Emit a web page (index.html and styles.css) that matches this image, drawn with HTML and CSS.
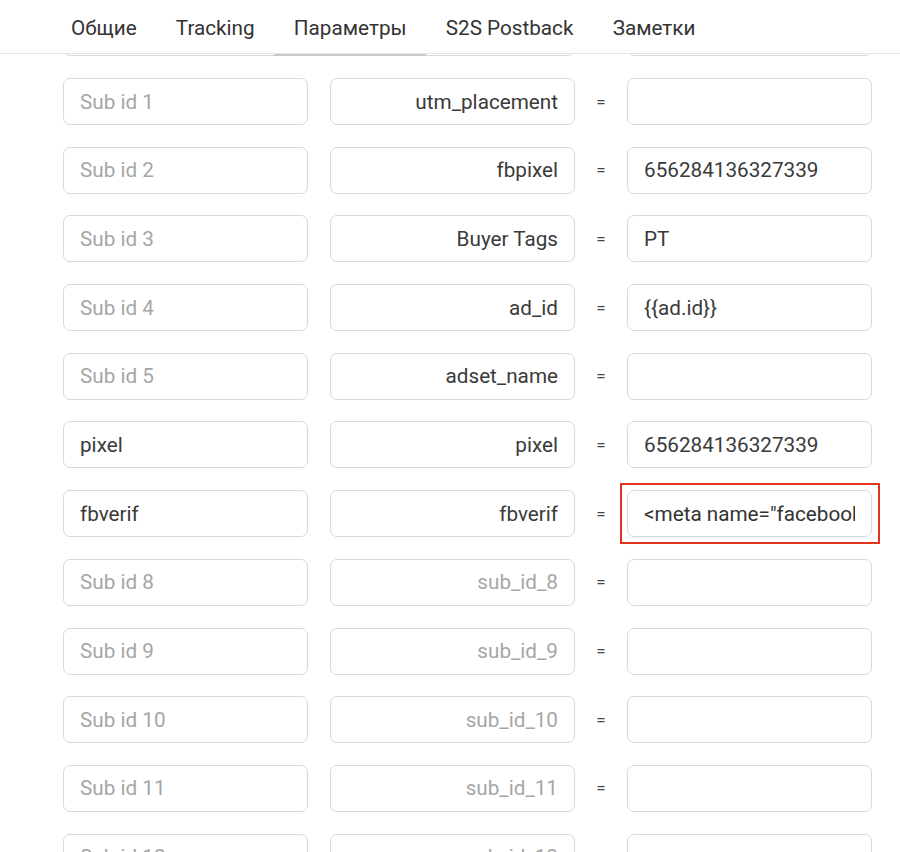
FILE: index.html
```html
<!DOCTYPE html>
<html lang="ru">
<head>
<meta charset="utf-8">
<title>Параметры</title>
<link rel="stylesheet" href="styles.css">
</head>
<body>
<div class="page">
  <nav class="tabs">
    <span class="tab">Общие</span>
    <span class="tab">Tracking</span>
    <span class="tab active">Параметры</span>
    <span class="tab">S2S Postback</span>
    <span class="tab">Заметки</span>
  </nav>
  <div class="viewport">
    <div class="list">
      <div class="row"><div class="field"></div><div class="field"></div><div class="eq"></div><div class="field"></div></div>
      <div class="row"><div class="field ph"><span>Sub id 1</span></div><div class="field right"><span>utm_placement</span></div><div class="eq">=</div><div class="field"></div></div>
      <div class="row"><div class="field ph"><span>Sub id 2</span></div><div class="field right"><span>fbpixel</span></div><div class="eq">=</div><div class="field"><span>656284136327339</span></div></div>
      <div class="row"><div class="field ph"><span>Sub id 3</span></div><div class="field right"><span>Buyer Tags</span></div><div class="eq">=</div><div class="field"><span>PT</span></div></div>
      <div class="row"><div class="field ph"><span>Sub id 4</span></div><div class="field right"><span>ad_id</span></div><div class="eq">=</div><div class="field"><span>{{ad.id}}</span></div></div>
      <div class="row"><div class="field ph"><span>Sub id 5</span></div><div class="field right"><span>adset_name</span></div><div class="eq">=</div><div class="field"></div></div>
      <div class="row"><div class="field"><span>pixel</span></div><div class="field right"><span>pixel</span></div><div class="eq">=</div><div class="field"><span>656284136327339</span></div></div>
      <div class="row"><div class="field"><span>fbverif</span></div><div class="field right"><span>fbverif</span></div><div class="eq">=</div><div class="field marked"><span>&lt;meta name="facebook-domain-verification" /&gt;</span></div></div>
      <div class="row"><div class="field ph"><span>Sub id 8</span></div><div class="field right ph"><span>sub_id_8</span></div><div class="eq">=</div><div class="field"></div></div>
      <div class="row"><div class="field ph"><span>Sub id 9</span></div><div class="field right ph"><span>sub_id_9</span></div><div class="eq">=</div><div class="field"></div></div>
      <div class="row"><div class="field ph"><span>Sub id 10</span></div><div class="field right ph"><span>sub_id_10</span></div><div class="eq">=</div><div class="field"></div></div>
      <div class="row"><div class="field ph"><span>Sub id 11</span></div><div class="field right ph"><span>sub_id_11</span></div><div class="eq">=</div><div class="field"></div></div>
      <div class="row"><div class="field ph"><span>Sub id 12</span></div><div class="field right ph"><span>sub_id_12</span></div><div class="eq">=</div><div class="field"></div></div>
    </div>
  </div>
</div>
</body>
</html>
```

FILE: styles.css
```css
html, body {
  margin: 0;
  padding: 0;
  background: #ffffff;
}
body {
  font-family: Roboto, "Liberation Sans", Arial, sans-serif;
  color: #3c3c3c;
}
.page {
  width: 900px;
  height: 852px;
  display: flex;
  flex-direction: column;
  overflow: hidden;
}
.tabs {
  height: 54px;
  flex: none;
  display: flex;
  align-items: stretch;
  padding-left: 51.5px;
  border-bottom: 1px solid #e4e4e6;
  position: relative;
  z-index: 2;
  background: #fff;
  box-sizing: border-box;
}
.tab {
  display: flex;
  align-items: center;
  padding: 2px 19.6px 0;
  font-size: 20.7px;
  color: #333;
  position: relative;
}
.tab.active::after {
  content: "";
  position: absolute;
  left: 0;
  right: 0;
  bottom: -3px;
  height: 2px;
  background: #c9c9cc;
}
.viewport {
  flex: 1;
  overflow: hidden;
  position: relative;
  z-index: 1;
}
.list {
  margin-top: -44.7px;
  display: flex;
  flex-direction: column;
  gap: 21.7px;
  padding-left: 63px;
}
.row {
  display: flex;
  align-items: center;
  height: 47px;
}
.field {
  width: 245px;
  height: 47px;
  box-sizing: border-box;
  border: 1px solid #d9d9dc;
  border-radius: 7px;
  background: #fff;
  display: flex;
  align-items: center;
  padding: 0 16px;
  font-size: 20.7px;
  color: #3a3a3a;
  flex: none;
  position: relative;
}
.field > span {
  display: block;
  width: 100%;
  overflow: hidden;
  white-space: nowrap;
}
.row > .field:first-child {
  margin-right: 22px;
}
.field.right {
  justify-content: flex-end;
}
.field.right > span {
  text-align: right;
}
.field.ph {
  color: #a6a6a6;
}
.eq {
  width: 52px;
  text-align: center;
  font-size: 17px;
  color: #444;
  flex: none;
}
.field.marked {
  color: #333;
}
.field.marked::after {
  content: "";
  position: absolute;
  top: -8px;
  left: -8px;
  right: -9px;
  bottom: -8px;
  border: 2px solid #e3341f;
  pointer-events: none;
}
```
